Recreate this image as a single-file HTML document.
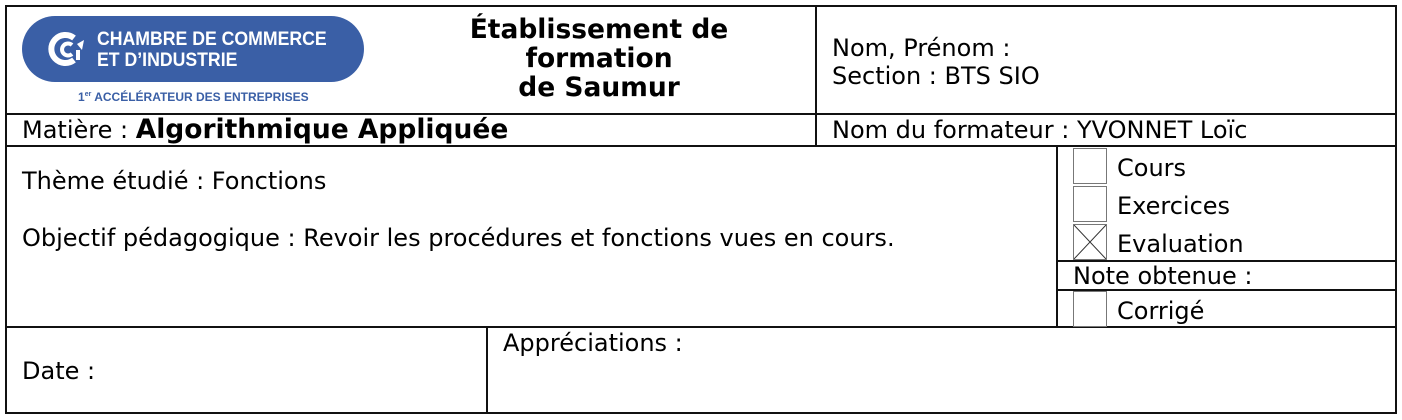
<!DOCTYPE html><html><head><meta charset="utf-8"><style>
body{margin:0;width:1402px;height:420px;background:#fff;position:relative;font-family:"DejaVu Sans","Liberation Sans",sans-serif;color:#000;overflow:hidden}
.l{position:absolute;background:#111}
.t{position:absolute;font-size:24px;white-space:nowrap;line-height:1}
.cb{position:absolute;left:1073px;width:34px;height:36px;border:1px solid #777;box-sizing:border-box}
</style></head><body>
<div class="l" style="left:6px;top:5px;width:1391px;height:2px"></div>
<div class="l" style="left:6px;top:412px;width:1391px;height:2px"></div>
<div class="l" style="left:5px;top:5px;width:2px;height:409px"></div>
<div class="l" style="left:1395px;top:5px;width:2px;height:409px"></div>
<div class="l" style="left:6px;top:113px;width:1391px;height:2px"></div>
<div class="l" style="left:6px;top:145px;width:1391px;height:2px"></div>
<div class="l" style="left:6px;top:326px;width:1391px;height:2px"></div>
<div class="l" style="left:815px;top:5px;width:2px;height:141px"></div>
<div class="l" style="left:1056px;top:146px;width:2px;height:181px"></div>
<div class="l" style="left:486px;top:327px;width:2px;height:86px"></div>
<div class="l" style="left:1057px;top:260px;width:340px;height:2px"></div>
<div class="l" style="left:1057px;top:289px;width:340px;height:2px"></div>

<div style="position:absolute;left:22px;top:16px;width:342px;height:66px;border-radius:33px;background:#3a5fa6"></div>
<svg style="position:absolute;left:46px;top:28px" width="42" height="42" viewBox="0 0 42 42"><path d="M28 10 A14 14 0 1 0 28 32" fill="none" stroke="#fff" stroke-width="6"/><path d="M26 17 A6 6 0 1 0 26 26" fill="none" stroke="#fff" stroke-width="4"/><path d="M31 16 L38 12 L36 22 Z" fill="#fff"/><rect x="30" y="22" width="4" height="10" fill="#fff"/></svg>
<div class="t" style="left:97px;top:29px;color:#fff;font-weight:bold;font-size:19px;font-family:'Liberation Sans',sans-serif;line-height:21px;transform:scaleX(0.93);transform-origin:left">CHAMBRE DE COMMERCE<br>ET D’INDUSTRIE</div>
<div class="t" style="left:78px;top:91px;color:#3a5fa6;font-weight:bold;font-size:12px;font-family:'Liberation Sans',sans-serif">1<sup style="font-size:7px">er</sup> ACCÉLÉRATEUR DES ENTREPRISES</div>

<div class="t" style="left:400px;top:15px;width:398px;text-align:center;font-weight:bold;font-size:26.5px;line-height:29px">Établissement de<br>formation<br>de Saumur</div>
<div class="t" style="left:832px;top:34px;line-height:28px">Nom, Prénom :<br>Section : BTS SIO</div>
<div class="t" style="left:22px;top:117px">Matière : <b style="font-size:26.5px">Algorithmique Appliquée</b></div>
<div class="t" style="left:832px;top:118px">Nom du formateur : YVONNET Loïc</div>
<div class="t" style="left:22px;top:169px">Thème étudié : Fonctions</div>
<div class="t" style="left:22px;top:226px">Objectif pédagogique : Revoir les procédures et fonctions vues en cours.</div>
<div class="cb" style="top:148px"></div><div class="t" style="left:1117px;top:156px">Cours</div>
<div class="cb" style="top:186px"></div><div class="t" style="left:1117px;top:194px">Exercices</div>
<div class="cb" style="top:224px"><svg width="32" height="34" style="display:block"><path d="M0 0L32 34M32 0L0 34" stroke="#333" stroke-width="1"/></svg></div><div class="t" style="left:1117px;top:232px">Evaluation</div>
<div class="t" style="left:1073px;top:264px">Note obtenue :</div>
<div class="cb" style="top:291px"></div><div class="t" style="left:1117px;top:299px">Corrigé</div>
<div class="t" style="left:22px;top:359px">Date :</div>
<div class="t" style="left:503px;top:331px">Appréciations :</div>
</body></html>
